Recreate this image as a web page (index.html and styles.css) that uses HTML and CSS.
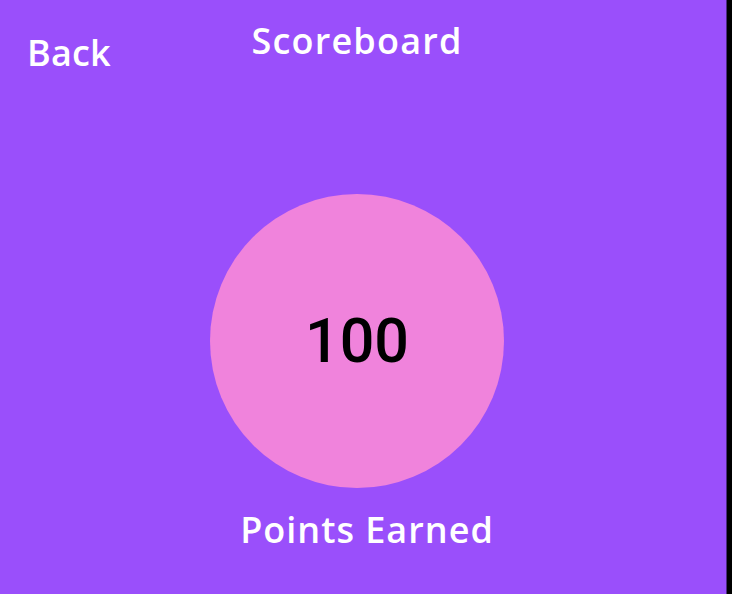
FILE: index.html
```html
<!DOCTYPE html>
<html lang="en">
<head>
<meta charset="utf-8">
<title>Scoreboard</title>
<link rel="stylesheet" href="styles.css">
</head>
<body>
<div class="frame">
  <main class="screen">
    <header class="topbar">
      <a class="back" href="#">Back</a>
      <h1 class="title">Scoreboard</h1>
      <span class="spacer"></span>
    </header>
    <section class="score">
      <div class="circle"><span class="points">100</span></div>
      <p class="label">Points Earned</p>
    </section>
  </main>
</div>
</body>
</html>
```
FILE: styles.css
```css
html, body {
  margin: 0;
  padding: 0;
  height: 100%;
  background: #000;
}
.frame {
  display: flex;
  height: 594px;
  width: 732px;
  background: #000;
}
.screen {
  width: 727px;
  height: 594px;
  padding-top: 23px;
  padding-right: 12px;
  box-sizing: border-box;
  background: #9a4ffb;
  border-right: 1px solid #4c2a80;
  display: flex;
  flex-direction: column;
  font-family: "Open Sans", "Liberation Sans", sans-serif;
  color: #fff;
}
.topbar {
  display: grid;
  grid-template-columns: 1fr auto 1fr;
  align-items: start;
}
.back {
  justify-self: start;
  margin-left: 27px;
  margin-top: 12px;
  color: #fff;
  text-decoration: none;
  font-size: 36px;
  font-weight: 600;
  letter-spacing: 0.2px;
  line-height: 1;
}
.title {
  margin: 0;
  font-size: 36px;
  font-weight: 600;
  letter-spacing: 1.2px;
  line-height: 1;
}
.score {
  display: flex;
  flex-direction: column;
  align-items: center;
  margin-top: 123px;
}
.circle {
  width: 294px;
  height: 294px;
  border-radius: 50%;
  background: #f083dc;
  display: flex;
  align-items: center;
  justify-content: center;
}
.points {
  font-family: Roboto, "Liberation Sans", sans-serif;
  font-weight: 500;
  font-size: 61px;
  color: #000;
  line-height: 1;
}
.label {
  margin: 24px 0 0 20px;
  font-size: 36px;
  font-weight: 600;
  letter-spacing: 1px;
  line-height: 1;
}
```
